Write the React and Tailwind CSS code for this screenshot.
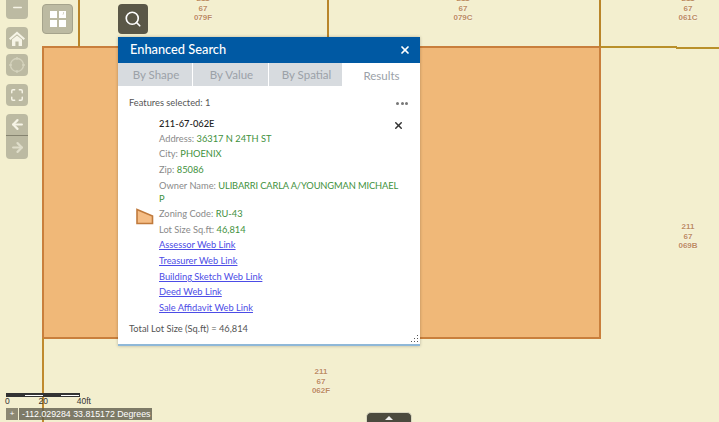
import React from "react";
import { Maximize, ArrowLeft, ArrowRight, Search, X, Minus } from "lucide-react";

const sans = { fontFamily: "Lato, 'Open Sans', sans-serif" };

function MapLabel({ x, y, lines }) {
  return (
    <div
      className="absolute w-10 -ml-5 text-center text-[8px] leading-[9.5px] font-bold text-[#bc8c60] [font-family:'Liberation_Sans',sans-serif] [text-shadow:0_0_2px_#fff]"
      style={{ left: x, top: y }}
    >
      {lines.map((l) => (
        <div key={l}>{l}</div>
      ))}
    </div>
  );
}

function Line({ className }) {
  return <div className={"absolute " + className} />;
}

function Field({ label, value }) {
  return (
    <div className="pb-[2.6px] whitespace-nowrap">
      <span className="text-[#8a8a8a]">{label}: </span>
      <span className="text-[#3f9140]">{value}</span>
    </div>
  );
}

function WebLink({ children }) {
  return (
    <div className="pb-[2.6px]">
      <a className="text-[#4c4ce6] underline" href="#x">
        {children}
      </a>
    </div>
  );
}

function ToolBtn({ children, className = "" }) {
  return (
    <div className={"w-[22px] flex items-center justify-center bg-[#bcbaa2] text-[#f6f4e6] rounded-[4px] " + className}>
      {children}
    </div>
  );
}

export default function App() {
  return (
    <div className="relative w-[719px] h-[422px] overflow-hidden bg-[#f3efcf]" style={sans}>
      {/* map parcels */}
      <div className="absolute left-[42px] top-[46px] w-[559px] h-[293px] bg-[#f0b878] border-2 border-[#c97f3c]" />
      <Line className="left-[42px] top-[338px] w-[2px] h-[84px] bg-[#c08a2e]" />
      <Line className="left-[78px] top-0 w-[2px] h-[47px] bg-[#b9852a]" />
      <Line className="left-[327px] top-0 w-[2px] h-[47px] bg-[#b9852a]" />
      <Line className="left-[599px] top-0 w-[2px] h-[47px] bg-[#b9852a]" />
      <Line className="left-[601px] top-[46px] w-[76px] h-[2px] bg-[#b9902a]" />
      <Line className="left-[676px] top-[47px] w-[43px] h-[2px] bg-[#b9902a]" />

      <MapLabel x={203} y={-6} lines={["211", "67", "079F"]} />
      <MapLabel x={463} y={-6} lines={["211", "67", "079C"]} />
      <MapLabel x={688} y={-6} lines={["211", "67", "061C"]} />
      <MapLabel x={688} y={222} lines={["211", "67", "069B"]} />
      <MapLabel x={321} y={367} lines={["211", "67", "062F"]} />

      {/* left toolbar */}
      <div className="absolute left-[6px] top-[-4px] w-[22px] flex flex-col">
        <ToolBtn className="h-[23px]"><Minus size={13} strokeWidth={2.5} /></ToolBtn>
        <ToolBtn className="h-[22px] mt-[8px]">
          <svg width="16" height="15" viewBox="0 0 16 15" fill="#f6f4e6">
            <path d="M8 0.5 L16 7.5 L14.6 9 L8 3.2 L1.4 9 L0 7.5 Z" />
            <path d="M3 8.6 L8 4.4 L13 8.6 V15 H9.6 V10.4 H6.4 V15 H3 Z" />
          </svg>
        </ToolBtn>
        <ToolBtn className="h-[22px] mt-[5px]">
          <svg width="18" height="18" viewBox="0 0 18 18" fill="none" stroke="#d5d3bd" strokeWidth="1.3">
            <circle cx="9" cy="9" r="6.5" />
            <path d="M9 1v3M9 14v3M1 9h3M14 9h3" />
          </svg>
        </ToolBtn>
        <ToolBtn className="h-[22px] mt-[8px]"><Maximize size={14} strokeWidth={2.5} /></ToolBtn>
        <ToolBtn className="h-[22px] mt-[8px] rounded-b-none border-b border-[#85836f]"><ArrowLeft size={15} strokeWidth={3.5} /></ToolBtn>
        <ToolBtn className="h-[23px] rounded-t-none"><ArrowRight size={15} strokeWidth={3.5} className="text-[#dfddc9]" /></ToolBtn>
      </div>

      {/* widget buttons */}
      <div className="absolute left-[42px] top-[4px] w-[31px] h-[30px] rounded-[4px] bg-[#bcbaa2] border border-[#a5a38c] flex items-center justify-center">
        <svg width="16" height="16" viewBox="0 0 16 16" fill="#fff">
          <rect x="0" y="0" width="7" height="7" />
          <path d="M9 0h7v7H9z M13.5 1 L12.6 3.8 L13.2 3.8 L14.1 1 Z" fillRule="evenodd" />
          <rect x="0" y="9" width="7" height="7" />
          <rect x="9" y="9" width="7" height="7" />
        </svg>
      </div>
      <div className="absolute left-[118px] top-[4px] w-[30px] h-[30px] rounded-[4px] bg-[#5a5747] flex items-center justify-center">
        <Search size={18} strokeWidth={2.2} className="text-white" />
      </div>

      {/* Enhanced Search window */}
      <div className="absolute left-[118px] top-[37px] w-[302px] h-[309px] bg-white shadow-[0_0_3px_rgba(0,0,0,0.25)] flex flex-col border-b-2 border-[#8fb8d8]">
        <div className="h-[26px] shrink-0 bg-[#0059a3] text-white flex items-center justify-between pl-[12px] pr-[9px]">
          <span className="text-[12.8px] font-medium">Enhanced Search</span>
          <X size={12} strokeWidth={3.5} />
        </div>
        <div className="h-[23px] shrink-0 flex text-[11.5px] text-[#9ba1a8] gap-px">
          <div className="w-[74px] bg-[#d7dbdf] flex items-center justify-center pl-[2px]">By Shape</div>
          <div className="w-[75px] bg-[#d7dbdf] flex items-center justify-center pl-[2px]">By Value</div>
          <div className="w-[73px] bg-[#d7dbdf] flex items-center justify-center pl-[2px]">By Spatial</div>
          <div className="flex-1 bg-white flex items-center justify-center pt-[2px]">Results</div>
        </div>
        <div className="relative flex-1 flex flex-col text-[9.3px] leading-[13px] pl-[11px] pt-[10px]">
          <div className="flex justify-between pr-[12px] text-[#555]">
            <span>Features selected: 1</span>
            <span className="flex gap-[1.5px] items-center pt-[2px]">
              <i className="w-[3px] h-[3px] rounded-full bg-[#777]" />
              <i className="w-[3px] h-[3px] rounded-full bg-[#777]" />
              <i className="w-[3px] h-[3px] rounded-full bg-[#777]" />
            </span>
          </div>
          <div className="flex mt-[8px]">
            <div className="w-[30px] shrink-0">
              <svg width="18" height="17" viewBox="0 0 18 17" className="mt-[91px] ml-[7px]">
                <path d="M1 1.5 L16.5 8 V15.5 H1 Z" fill="#f5bd85" stroke="#c07a3c" strokeWidth="1.6" />
              </svg>
            </div>
            <div className="w-[246px]">
              <div className="pb-[1.8px] text-[#222] font-medium">211-67-062E</div>
              <Field label="Address" value="36317 N 24TH ST" />
              <Field label="City" value="PHOENIX" />
              <Field label="Zip" value="85086" />
              <Field
                label="Owner Name"
                value={
                  <span className="tracking-[-0.12px]">
                    ULIBARRI CARLA A/YOUNGMAN MICHAEL
                    <br />P
                  </span>
                }
              />
              <Field label="Zoning Code" value="RU-43" />
              <Field label="Lot Size Sq.ft" value="46,814" />
              <WebLink>Assessor Web Link</WebLink>
              <WebLink>Treasurer Web Link</WebLink>
              <WebLink>Building Sketch Web Link</WebLink>
              <WebLink>Deed Web Link</WebLink>
              <WebLink>Sale Affidavit Web Link</WebLink>
            </div>
            <X size={11} strokeWidth={3.2} className="absolute left-[275px] top-[34px] text-[#333]" />
          </div>
          <div className="mt-[6px] text-[#555]">Total Lot Size (Sq.ft) = 46,814</div>
          <svg width="8" height="8" viewBox="0 0 8 8" fill="#555" className="absolute right-[1px] bottom-[1px]">
            <rect x="6" y="0" width="1" height="1" />
            <rect x="6" y="3" width="1" height="1" />
            <rect x="3" y="3" width="1" height="1" />
            <rect x="6" y="6" width="1" height="1" />
            <rect x="3" y="6" width="1" height="1" />
            <rect x="0" y="6" width="1" height="1" />
          </svg>
        </div>
      </div>

      {/* scale bar */}
      <div className="absolute left-[6px] top-[393px] w-[74px] h-[4px] border border-[#333] border-t-2 bg-[#ccc] flex">
        <div className="w-1/4 bg-[#333]" />
        <div className="w-1/4 bg-white" />
        <div className="w-1/4 bg-[#333]" />
        <div className="w-1/4 bg-white" />
      </div>
      <div className="absolute left-[5px] top-[397px] w-[86px] flex justify-between text-[8.5px] leading-[9px] text-[#333] [font-family:'Liberation_Sans',sans-serif]">
        <span>0</span>
        <span>20</span>
        <span>40ft</span>
      </div>

      {/* coordinates */}
      <div className="absolute left-[6px] top-[408px] w-[146px] h-[12px] flex text-white text-[8.8px] leading-[12px] [font-family:'Liberation_Sans',sans-serif]">
        <div className="w-[12px] bg-[#5f5d4c]/70 flex items-center justify-center text-[8px] mr-px">+</div>
        <div className="flex-1 bg-[#5f5d4c]/80 pl-[3px] whitespace-nowrap">-112.029284 33.815172 Degrees</div>
      </div>

      {/* bottom toggle */}
      <div className="absolute left-[366px] top-[412px] w-[46px] h-[10px] rounded-t-[5px] bg-[#4b4a3e] border border-[#d8d6c0] border-b-0 flex justify-center pt-[3px]">
        <div className="w-0 h-0 border-x-[4px] border-x-transparent border-b-[4px] border-b-[#eee]" />
      </div>
    </div>
  );
}
